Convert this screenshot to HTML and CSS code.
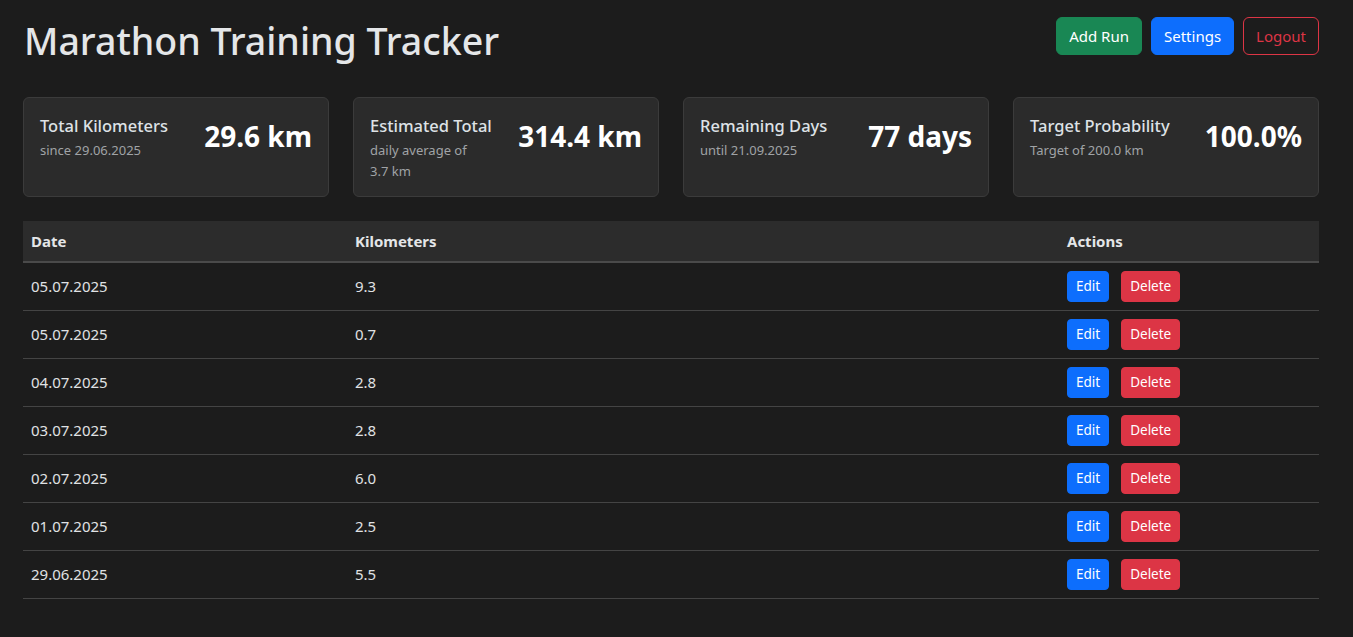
FILE: index.html
```html
<!DOCTYPE html>
<html lang="en">
<head>
<meta charset="utf-8">
<title>Marathon Training Tracker</title>
<link rel="stylesheet" href="styles.css">
</head>
<body>
<div class="page">
  <header class="topbar">
    <h1 class="title">Marathon Training Tracker</h1>
    <div class="top-actions">
      <button class="btn btn-success">Add Run</button>
      <button class="btn btn-primary">Settings</button>
      <button class="btn btn-outline-danger">Logout</button>
    </div>
  </header>

  <section class="stats">
    <div class="card">
      <div class="card-text">
        <div class="card-title">Total Kilometers</div>
        <div class="card-sub">since 29.06.2025</div>
      </div>
      <div class="card-value">29.6 km</div>
    </div>
    <div class="card">
      <div class="card-text">
        <div class="card-title">Estimated Total</div>
        <div class="card-sub narrow">daily average of 3.7 km</div>
      </div>
      <div class="card-value">314.4 km</div>
    </div>
    <div class="card">
      <div class="card-text">
        <div class="card-title">Remaining Days</div>
        <div class="card-sub">until 21.09.2025</div>
      </div>
      <div class="card-value">77 days</div>
    </div>
    <div class="card">
      <div class="card-text">
        <div class="card-title">Target Probability</div>
        <div class="card-sub">Target of 200.0 km</div>
      </div>
      <div class="card-value">100.0%</div>
    </div>
  </section>

  <table class="runs">
    <thead>
      <tr><th class="c-date">Date</th><th class="c-km">Kilometers</th><th class="c-act">Actions</th></tr>
    </thead>
    <tbody>
      <tr><td>05.07.2025</td><td>9.3</td><td><div class="acts"><button class="btn btn-sm btn-primary">Edit</button><button class="btn btn-sm btn-danger">Delete</button></div></td></tr>
      <tr><td>05.07.2025</td><td>0.7</td><td><div class="acts"><button class="btn btn-sm btn-primary">Edit</button><button class="btn btn-sm btn-danger">Delete</button></div></td></tr>
      <tr><td>04.07.2025</td><td>2.8</td><td><div class="acts"><button class="btn btn-sm btn-primary">Edit</button><button class="btn btn-sm btn-danger">Delete</button></div></td></tr>
      <tr><td>03.07.2025</td><td>2.8</td><td><div class="acts"><button class="btn btn-sm btn-primary">Edit</button><button class="btn btn-sm btn-danger">Delete</button></div></td></tr>
      <tr><td>02.07.2025</td><td>6.0</td><td><div class="acts"><button class="btn btn-sm btn-primary">Edit</button><button class="btn btn-sm btn-danger">Delete</button></div></td></tr>
      <tr><td>01.07.2025</td><td>2.5</td><td><div class="acts"><button class="btn btn-sm btn-primary">Edit</button><button class="btn btn-sm btn-danger">Delete</button></div></td></tr>
      <tr><td>29.06.2025</td><td>5.5</td><td><div class="acts"><button class="btn btn-sm btn-primary">Edit</button><button class="btn btn-sm btn-danger">Delete</button></div></td></tr>
    </tbody>
  </table>
</div>
</body>
</html>
```

FILE: styles.css
```css
* { box-sizing: border-box; }
html, body { margin: 0; padding: 0; }
body {
  background: #1c1c1c;
  color: #dee2e6;
  font-family: "Noto Sans", "Open Sans", sans-serif;
  font-size: 16px;
  line-height: 1.5;
}
.page {
  width: 1296px;
  margin-left: 23px;
  padding-top: 17px;
}
.topbar {
  display: flex;
  justify-content: space-between;
  align-items: flex-start;
}
.title {
  margin: 0;
  padding-left: 1px;
  font-size: 37.5px;
  font-weight: 500;
  line-height: 48px;
  color: #e4e6e8;
}
.top-actions {
  display: flex;
  gap: 9px;
}
.btn {
  font-family: inherit;
  font-size: 15px;
  line-height: 24px;
  padding: 6px 12px;
  border: 1px solid transparent;
  border-radius: 6px;
  cursor: pointer;
}
.btn-success { background: #198754; border-color: #198754; color: #fff; }
.btn-primary { background: #0d6efd; border-color: #0d6efd; color: #fff; }
.btn-outline-danger { background: transparent; border-color: #dc3545; color: #dc3545; }
.btn-danger { background: #dc3545; border-color: #dc3545; color: #fff; }
.btn-sm {
  font-size: 13.5px;
  line-height: 21px;
  padding: 4px 8px;
  border-radius: 4px;
}

.stats {
  display: grid;
  grid-template-columns: repeat(4, 1fr);
  gap: 24px;
  margin-top: 32px;
}
.card {
  background: #2b2b2b;
  border: 1px solid #3b3b3b;
  border-radius: 6px;
  height: 100px;
  padding: 16px;
  display: flex;
  justify-content: space-between;
  align-items: flex-start;
}
.card-title {
  font-size: 16.5px;
  font-weight: 500;
  color: #dee2e6;
  line-height: 24px;
}
.card-sub {
  font-size: 13px;
  color: #a0a3a6;
  line-height: 21px;
  margin-top: 2px;
}
.card-sub.narrow { width: 110px; }
.card-value {
  font-size: 28px;
  font-weight: 700;
  color: #ffffff;
  line-height: 40px;
  margin-top: 2px;
}

.runs {
  width: 100%;
  margin-top: 24px;
  border-collapse: collapse;
}
.runs th, .runs td {
  text-align: left;
  padding: 8px;
  vertical-align: middle;
}
.runs th {
  background: #2c2c2c;
  font-size: 15px;
  font-weight: 700;
  color: #e4e6e8;
  border-bottom: 2px solid #4a4a4a;
  height: 41px;
}
.runs td {
  border-bottom: 1px solid #444;
  color: #e0e2e4;
  font-size: 15px;
  height: 48px;
}
.c-date { width: 324px; }
.c-act { width: 260px; }
.acts { display: flex; gap: 12px; }
```
